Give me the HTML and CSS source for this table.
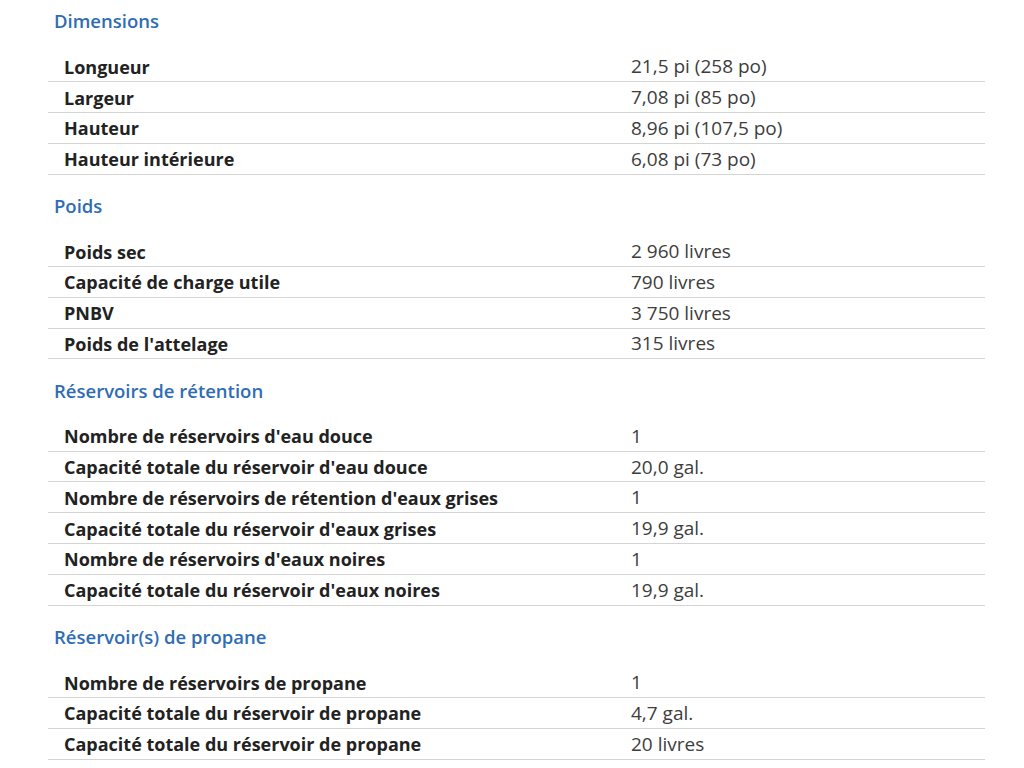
FILE: index.html
```html
<!DOCTYPE html>
<html lang="fr">
<head>
<meta charset="utf-8">
<link rel="stylesheet" href="styles.css">
</head>
<body>
<div class="specs">
  <section class="group first">
    <h2 class="title">Dimensions</h2>
    <div class="row"><span class="label">Longueur</span><span class="value">21,5 pi (258 po)</span></div>
    <div class="row"><span class="label">Largeur</span><span class="value">7,08 pi (85 po)</span></div>
    <div class="row"><span class="label">Hauteur</span><span class="value">8,96 pi (107,5 po)</span></div>
    <div class="row"><span class="label">Hauteur intérieure</span><span class="value">6,08 pi (73 po)</span></div>
  </section>
  <section class="group">
    <h2 class="title">Poids</h2>
    <div class="row"><span class="label">Poids sec</span><span class="value">2 960 livres</span></div>
    <div class="row"><span class="label">Capacité de charge utile</span><span class="value">790 livres</span></div>
    <div class="row"><span class="label">PNBV</span><span class="value">3 750 livres</span></div>
    <div class="row"><span class="label">Poids de l'attelage</span><span class="value">315 livres</span></div>
  </section>
  <section class="group">
    <h2 class="title">Réservoirs de rétention</h2>
    <div class="row"><span class="label">Nombre de réservoirs d'eau douce</span><span class="value">1</span></div>
    <div class="row"><span class="label">Capacité totale du réservoir d'eau douce</span><span class="value">20,0 gal.</span></div>
    <div class="row"><span class="label">Nombre de réservoirs de rétention d'eaux grises</span><span class="value">1</span></div>
    <div class="row"><span class="label">Capacité totale du réservoir d'eaux grises</span><span class="value">19,9 gal.</span></div>
    <div class="row"><span class="label">Nombre de réservoirs d'eaux noires</span><span class="value">1</span></div>
    <div class="row"><span class="label">Capacité totale du réservoir d'eaux noires</span><span class="value">19,9 gal.</span></div>
  </section>
  <section class="group">
    <h2 class="title">Réservoir(s) de propane</h2>
    <div class="row"><span class="label">Nombre de réservoirs de propane</span><span class="value">1</span></div>
    <div class="row"><span class="label">Capacité totale du réservoir de propane</span><span class="value">4,7 gal.</span></div>
    <div class="row"><span class="label">Capacité totale du réservoir de propane</span><span class="value">20 livres</span></div>
  </section>
</div>
</body>
</html>
```
FILE: styles.css
```css
html, body {
  margin: 0;
  padding: 0;
  background: #ffffff;
}
body {
  font-family: "Open Sans", "Noto Sans", sans-serif;
}
.specs {
  width: 937px;
  margin-left: 48px;
  display: flex;
  flex-direction: column;
}
.group {
  display: flex;
  flex-direction: column;
}
.title {
  margin: 0;
  height: 61.5px;
  display: flex;
  align-items: center;
  padding-left: 6px;
  font-size: 18.5px;
  font-weight: 600;
  color: #2f6db3;
}
.group.first .title {
  margin-top: -10px;
}
.row {
  display: grid;
  grid-template-columns: 567px 1fr;
  height: 28.8px;
  padding-top: 1px;
  border-bottom: 1px solid #d4d4d4;
  align-items: center;
  line-height: 1;
}
.label {
  padding-left: 16px;
  font-size: 18px;
  font-weight: 700;
  color: #222222;
}
.value {
  padding-left: 16px;
  font-size: 19px;
  color: #3d3d3d;
}
```
